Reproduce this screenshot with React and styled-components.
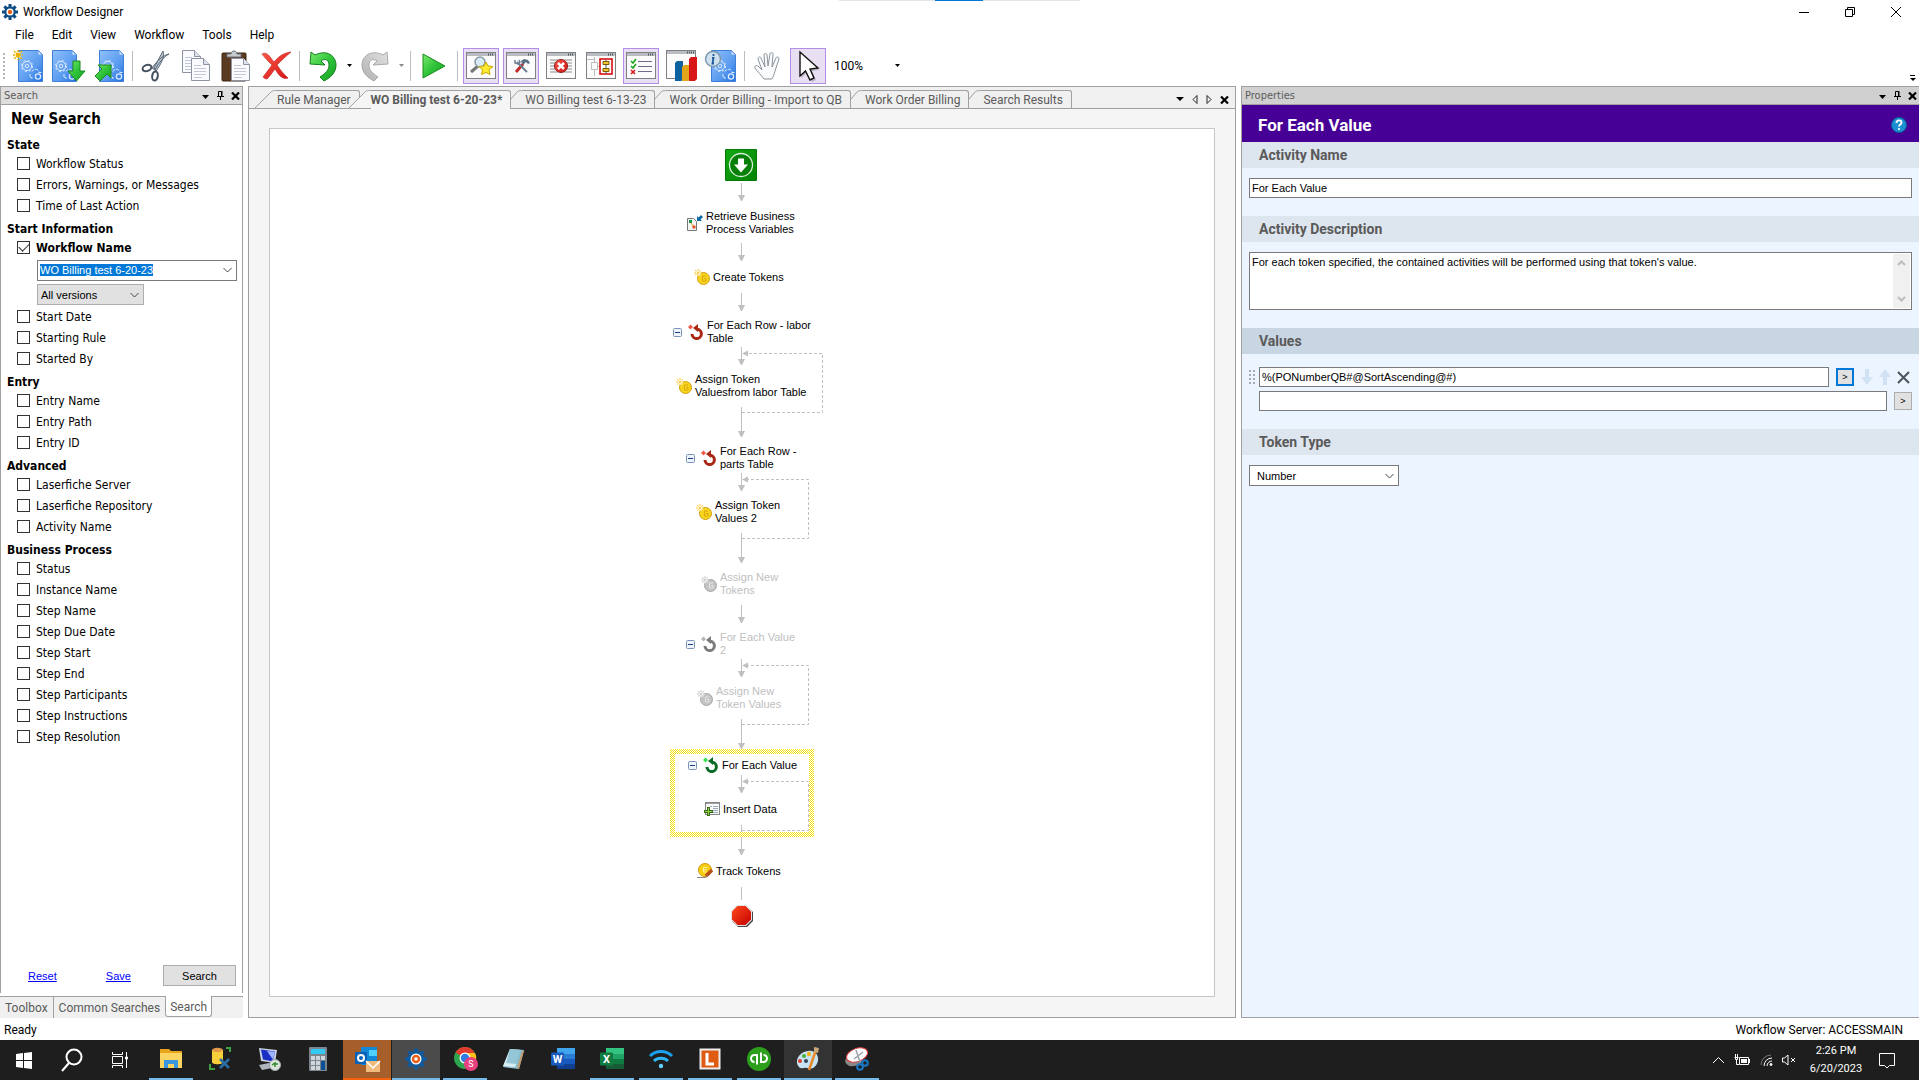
import { useEffect, useRef } from "react";
import styled, { createGlobalStyle } from "styled-components";

const searchGroups = [
  { title: "State", items: ["Workflow Status", "Errors, Warnings, or Messages", "Time of Last Action"] },
  { title: "Start Information", items: ["Workflow Name", "Start Date", "Starting Rule", "Started By"] },
  { title: "Entry", items: ["Entry Name", "Entry Path", "Entry ID"] },
  { title: "Advanced", items: ["Laserfiche Server", "Laserfiche Repository", "Activity Name"] },
  {
    title: "Business Process",
    items: [
      "Status",
      "Instance Name",
      "Step Name",
      "Step Due Date",
      "Step Start",
      "Step End",
      "Step Participants",
      "Step Instructions",
      "Step Resolution",
    ],
  },
];

const documents = [
  "Rule Manager",
  "WO Billing test 6-20-23*",
  "WO Billing test 6-13-23",
  "Work Order Billing - Import to QB",
  "Work Order Billing",
  "Search Results",
];

// positions are measured from the top left of the diagram
const nodes = [
  { x: 36, y: 81, icon: "retrieve", lines: ["Retrieve Business", "Process Variables"] },
  { x: 43, y: 140, icon: "token", lines: ["Create Tokens"] },
  { x: 22, y: 190, icon: "loopRed", lines: ["For Each Row - labor", "Table"], toggle: true },
  { x: 25, y: 244, icon: "token", lines: ["Assign Token", "Valuesfrom labor Table"] },
  { x: 35, y: 316, icon: "loopRed", lines: ["For Each Row -", "parts Table"], toggle: true },
  { x: 45, y: 370, icon: "token", lines: ["Assign Token", "Values 2"] },
  { x: 50, y: 442, icon: "tokenOff", lines: ["Assign New", "Tokens"], off: true },
  { x: 35, y: 502, icon: "loopOff", lines: ["For Each Value", "2"], toggle: true, off: true },
  { x: 46, y: 556, icon: "tokenOff", lines: ["Assign New", "Token Values"], off: true },
  { x: 37, y: 628, icon: "loopGreen", lines: ["For Each Value"], toggle: true },
  { x: 53, y: 672, icon: "insert", lines: ["Insert Data"] },
  { x: 46, y: 734, icon: "track", lines: ["Track Tokens"] },
];

const arrows = [
  [54, 72],
  [114, 132],
  [164, 182],
  [218, 236],
  [278, 308],
  [344, 362],
  [404, 434],
  [476, 494],
  [530, 548],
  [590, 620],
  [646, 664],
  [696, 726],
];

const loops = [
  [224, 283, 171],
  [350, 409, 157],
  [536, 595, 157],
  [652, 701, 157],
];

export default function App() {
  return (
    <Page>
      <GlobalStyle />
      <Gradients />
      <ScreenEdge />
      <TitleBar />
      <MenuBar>
        {["File", "Edit", "View", "Workflow", "Tools", "Help"].map((name) => (
          <button key={name}>{name}</button>
        ))}
      </MenuBar>
      <MainToolbar />
      <Workspace>
        <SearchPanel />
        <Designer />
        <Properties />
      </Workspace>
      <StatusBar>
        <span>Ready</span>
        <span>Workflow Server: ACCESSMAIN</span>
      </StatusBar>
      <Taskbar />
    </Page>
  );
}

function TitleBar() {
  return (
    <Title>
      <svg width="16" height="16" viewBox="0 0 16 16">
        <Gear cx={8} cy={8} r={5} color="#0f4c81" tooth={3} />
        <circle cx="8" cy="8" r="3.6" fill="#fff" />
        <circle cx="8" cy="8" r="2.2" fill="#e5601c" />
      </svg>
      <h1>Workflow Designer</h1>
      <WindowButtons>
        <button aria-label="Minimize">
          <svg width="12" height="12" viewBox="0 0 12 12">
            <path d="M1 6.5h10" stroke="#000" />
          </svg>
        </button>
        <button aria-label="Restore">
          <svg width="12" height="12" viewBox="0 0 12 12" fill="none" stroke="#000">
            <path d="M1.5 3.5h7v7h-7zM3.5 3.5v-2h7v7h-2" />
          </svg>
        </button>
        <button aria-label="Close">
          <svg width="12" height="12" viewBox="0 0 12 12" stroke="#000">
            <path d="M1 1l10 10M11 1L1 11" />
          </svg>
        </button>
      </WindowButtons>
    </Title>
  );
}

function MainToolbar() {
  return (
    <ToolbarRow>
      <Grip />
      <Tool aria-label="New workflow">
        <svg width="32" height="32" viewBox="0 0 32 32">
          <BluePage x={5} />
          <Spark x={5} y={5} />
        </svg>
      </Tool>
      <Tool aria-label="Export workflow">
        <svg width="34" height="32" viewBox="0 0 34 32">
          <BluePage x={0} />
          <path d="M21 11h7v10h5l-8.5 10L16 21h5z" fill="url(#green)" stroke="#1c8a1c" />
        </svg>
      </Tool>
      <Tool aria-label="Import workflow">
        <svg width="32" height="32" viewBox="0 0 32 32">
          <BluePage x={6} />
          <path d="M5 15h13v13l-4-4-7 7-5-5 7-7z" fill="url(#green)" stroke="#1c8a1c" />
        </svg>
      </Tool>
      <Separator />
      <Tool aria-label="Cut">
        <svg width="30" height="32" viewBox="0 0 30 32" fill="none">
          <path d="M22 1c2 6-2 13-7 20l-2-3zM28 4c-4 2-11 9-14 16l-3-2C16 11 22 5 28 4z" fill="#b8c3cd" stroke="#5b6a78" />
          <ellipse cx="6" cy="18" rx="4.5" ry="3" stroke="#44525f" strokeWidth="2" transform="rotate(-20 6 18)" />
          <ellipse cx="14" cy="26" rx="2.8" ry="4.5" stroke="#44525f" strokeWidth="2" transform="rotate(10 14 26)" />
        </svg>
      </Tool>
      <Tool aria-label="Copy">
        <svg width="30" height="32" viewBox="0 0 30 32">
          <Sheet x={1} y={0} />
          <Sheet x={10} y={8} />
        </svg>
      </Tool>
      <Tool aria-label="Paste">
        <svg width="30" height="32" viewBox="0 0 30 32">
          <rect x="1" y="3" width="24" height="28" rx="1" fill="#5a3a20" stroke="#3d2613" />
          <path d="M6 7V4h4c0-4 6-4 6 0h4v3z" fill="#c6cbd0" stroke="#6c7177" />
          <Sheet x={10} y={8} />
        </svg>
      </Tool>
      <Tool aria-label="Delete">
        <svg width="32" height="32" viewBox="0 0 32 32">
          <path
            d="M2 4c5-3 8 3 12 8C18 7 23 3 31 2c-5 4-10 9-14 13 4 6 7 9 11 13-5 2-9-2-13-9-3 4-5 7-8 10-2 0-3-1-4-2 3-4 6-8 9-12C8 11 5 8 2 4z"
            fill="url(#red)"
            stroke="#c22020"
            strokeWidth=".6"
          />
        </svg>
      </Tool>
      <Separator />
      <Tool aria-label="Undo">
        <UndoArrow fill="url(#green)" stroke="#15801e" />
      </Tool>
      <Drop aria-label="Undo list">
        <Caret color="#000" />
      </Drop>
      <Tool aria-label="Redo">
        <UndoArrow flip fill="url(#silver)" stroke="#a9a9a9" />
      </Tool>
      <Drop aria-label="Redo list">
        <Caret color="#8a8a8a" />
      </Drop>
      <Separator />
      <Tool aria-label="Run">
        <svg width="26" height="28" viewBox="0 0 26 28">
          <path d="M2 2l22 12L2 26z" fill="url(#green)" stroke="#1c8a1c" />
        </svg>
      </Tool>
      <Separator />
      <Tool $on aria-label="Search window">
        <WindowIcon>
          <path d="M12 16l-7 6" stroke="#777" strokeWidth="3" />
          <circle cx="14" cy="12" r="5" fill="#d8ecf8" stroke="#8c9aa5" strokeWidth="1.5" />
          <path d="M20 12l2 4 5 .5-4 3.500 1 4.500-4-2-4.500 2 1-4.500-3.500-3.500 5-.5z" fill="#ffe92e" stroke="#c9a800" />
        </WindowIcon>
      </Tool>
      <Tool $on aria-label="Toolbox window">
        <WindowIcon>
          <path d="M17 14l-7 8" stroke="#c22929" strokeWidth="3" />
          <path d="M11 12l10 10" stroke="#6a7e92" strokeWidth="2" />
          <path d="M9 10v3l3 1 2-2-1-2" fill="none" stroke="#6a7e92" strokeWidth="1.5" />
          <path d="M15 11l3-2 4 1 2 3-2 1-2-2-3 3z" fill="#5a6e82" />
        </WindowIcon>
      </Tool>
      <Tool aria-label="Errors window">
        <WindowIcon>
          <path d="M4 10h8M4 13h6M4 16h5M4 19h6M4 22h8M18 10h8M20 13h6M21 16h5M20 19h6M18 22h8" stroke="#8b8b8b" />
          <circle cx="15" cy="16" r="6.5" fill="url(#red)" stroke="#8d1a1a" />
          <path d="M12 13l6 6M18 13l-6 6" stroke="#fff" strokeWidth="2.5" />
        </WindowIcon>
      </Tool>
      <Tool aria-label="Overview window">
        <WindowIcon>
          <path d="M8.500 7v6M8.500 19v7M1 9.500h7M5.500 12.500h6v7h-6zM11 16.500h3" fill="none" stroke="#bdbdbd" />
          <rect x="14" y="9" width="12" height="15" fill="#fff" stroke="#d40000" strokeWidth="1.5" />
          <path d="M20 10v14" stroke="#555" />
          <path d="M17 11.500h6v3h-6zM17 18.500h6v3h-6z" fill="#f2c335" stroke="#7a5a00" />
        </WindowIcon>
      </Tool>
      <Tool $on aria-label="Task list window">
        <WindowIcon>
          <path d="M12 11.500h14M12 16.500h14M12 21.500h14" stroke="#6d6d8b" />
          <path d="M5 11l2 2 3-4M5 16l2 2 3-4" fill="none" stroke="#1aa51a" strokeWidth="1.5" />
          <path d="M5 20l4 4M9 20l-4 4" stroke="#d41414" strokeWidth="1.5" />
        </WindowIcon>
      </Tool>
      <Tool aria-label="Statistics window">
        <WindowIcon tall>
          <path d="M9 13l2-2h6v19l-2 1H9z" fill="#0f62a0" />
          <path d="M16 17l2-2h6v15l-2 1h-6z" fill="#e3a51a" />
          <path d="M23 9l2-2h6v22l-2 2h-6z" fill="#d81616" />
        </WindowIcon>
      </Tool>
      <Tool aria-label="Workflow information">
        <svg width="34" height="32" viewBox="0 0 34 32">
          <BluePage x={7} />
          <circle cx="9" cy="9" r="7.5" fill="#cfe0ee" stroke="#7f99ad" strokeWidth="1.5" />
          <path d="M9.500 4v2M8 8h1.500l-1 5.500H10" stroke="#1d5c9c" strokeWidth="1.8" fill="none" />
        </svg>
      </Tool>
      <Separator />
      <Tool aria-label="Pan">
        <svg width="30" height="30" viewBox="0 0 30 30">
          <path
            d="M11 28c-2-3-7-8-9-11-1-2 1-3 3-2l4 4L5 8c0-2 2-3 3-1l4 9-1-12c0-2 3-2 3 0l1 11 2-12c0-2 3-2 3 0l-1 13 4-9c1-2 3-1 3 1l-4 12c-1 4-2 6-3 8z"
            fill="#fafbfc"
            stroke="#8b949c"
          />
        </svg>
      </Tool>
      <Tool $on aria-label="Select">
        <svg width="30" height="32" viewBox="0 0 30 32">
          <path d="M8 4v24l6-5 5 9 4-2-4-9 7-1z" fill="#8d8798" opacity=".5" />
          <path d="M7 2v24l5.500-5 4.500 9 4-2-4-9 8-1z" fill="#fff" stroke="#111" strokeWidth="1.4" />
        </svg>
      </Tool>
      <Zoom aria-label="Zoom">
        <span>100%</span>
        <Caret color="#000" />
      </Zoom>
      <Overflow aria-label="Toolbar options">
        <svg width="6" height="7" viewBox="0 0 6 7">
          <path d="M0 .5h5" stroke="#000" />
          <path d="M0 3h6L3 6z" />
        </svg>
      </Overflow>
    </ToolbarRow>
  );
}

function SearchPanel() {
  const nameRef = useRef(null);
  useEffect(() => {
    nameRef.current.focus();
    nameRef.current.select();
  }, []);

  return (
    <SearchColumn>
      <PanelHeader title="Search" />
      <SearchBody>
        <h2>New Search</h2>
        {searchGroups.map((group) => (
          <section key={group.title}>
            <h3>{group.title}</h3>
            {group.items.map((item) => (
              <div key={item}>
                <CheckRow $bold={item === "Workflow Name"}>
                  <input type="checkbox" defaultChecked={item === "Workflow Name"} />
                  {item}
                </CheckRow>
                {item === "Workflow Name" && (
                  <NameFilter>
                    <ComboBox>
                      <input ref={nameRef} aria-label="Workflow name" defaultValue="WO Billing test 6-20-23" size="1" />
                      <Chevron />
                    </ComboBox>
                    <SelectBox $grey>
                      <select aria-label="Versions">
                        <option>All versions</option>
                      </select>
                      <Chevron />
                    </SelectBox>
                  </NameFilter>
                )}
              </div>
            ))}
          </section>
        ))}
        <SearchActions>
          <a href="#reset">Reset</a>
          <a href="#save">Save</a>
          <button>Search</button>
        </SearchActions>
      </SearchBody>
      <BottomTabs>
        <button>Toolbox</button>
        <button>Common Searches</button>
        <button aria-current="page">Search</button>
      </BottomTabs>
    </SearchColumn>
  );
}

function Designer() {
  return (
    <DesignerColumn>
      <TabStrip>
        {documents.map((name, i) => (
          <DocTab key={name} $active={i === 1}>
            {i < 2 ? (
              <svg width="22" height="18" viewBox="0 0 22 18">
                <path d="M0 18L16 2c1-1 2-1.500 6-1.500V18z" fill={i === 1 ? "#f5f5f5" : "#f0f0f0"} />
                <path d="M0 18L16 2c1-1 2-1.500 6-1.500" fill="none" stroke="#a0a0a0" />
              </svg>
            ) : (
              <svg width="14" height="18" viewBox="0 0 14 18">
                <path d="M0 9l6-7c1-1 2-1.500 8-1.500" fill="none" stroke="#a0a0a0" />
              </svg>
            )}
            <span>{name}</span>
          </DocTab>
        ))}
        <TabTools>
          <button aria-label="Open documents">
            <svg width="8" height="5" viewBox="0 0 8 5">
              <path d="M0 0h8L4 4z" />
            </svg>
          </button>
          <button aria-label="Scroll left">
            <svg width="6" height="9" viewBox="0 0 6 9">
              <path d="M5 .5v8l-4-4z" fill="none" stroke="#222" />
            </svg>
          </button>
          <button aria-label="Scroll right">
            <svg width="6" height="9" viewBox="0 0 6 9">
              <path d="M1 .5v8l4-4z" fill="none" stroke="#222" />
            </svg>
          </button>
          <button aria-label="Close document">
            <CrossIcon />
          </button>
        </TabTools>
      </TabStrip>
      <Canvas>
        <Diagram>
          <Connectors />
          <StartNode>
            <svg width="32" height="32" viewBox="0 0 32 32">
              <rect width="32" height="32" rx="1" fill="#057a05" />
              <rect x="1" y="1" width="30" height="30" fill="url(#start)" />
              <circle cx="16" cy="16" r="11.5" fill="#067f06" stroke="#d9f0d9" strokeWidth="1.3" />
              <path d="M13 9.500h6v6h4l-7 8-7-8h4z" fill="#fff" />
            </svg>
          </StartNode>
          {nodes.map((node) => (
            <Node key={node.x + "-" + node.y} $x={node.x} $y={node.y} $off={node.off}>
              {node.toggle && (
                <Toggle aria-label={"Collapse " + node.lines.join(" ")}>
                  <svg width="9" height="9" viewBox="0 0 9 9">
                    <rect x=".5" y=".5" width="8" height="8" rx="1" fill="#eef3fb" stroke="#7b93b8" />
                    <path d="M2 4.500h5" stroke="#1b3d7a" />
                  </svg>
                </Toggle>
              )}
              <NodeIcon name={node.icon} />
              <p>
                {node.lines.map((line) => (
                  <span key={line}>{line}</span>
                ))}
              </p>
            </Node>
          ))}
          <StopNode>
            <svg width="24" height="24" viewBox="0 0 24 24">
              <path d="M8 2h8l7 6v9l-6 6H8l-6-6V8z" fill="#444" />
              <path d="M7 1h9l6 6v9l-6 6H7l-6-6V7z" fill="#e4e4e4" />
              <path d="M7.500 2h8l5.500 5.500v8L15.500 21h-8L2 15.500v-8z" fill="url(#stop)" />
            </svg>
          </StopNode>
        </Diagram>
      </Canvas>
    </DesignerColumn>
  );
}

function Connectors() {
  return (
    <svg width="182" height="820" viewBox="0 0 182 820">
      <g fill="#c0c0c0">
        {arrows.map(([top, bottom]) => (
          <path key={top} d={`M90 ${top}h1v${bottom - top - 6}h3l-3 6h-1l-3-6h3z`} />
        ))}
        <path d="M90 758h1v13h-1z" />
        {loops.map(([top]) => (
          <path key={top} d={`M91 ${top + 0.5}l6-3v6z`} />
        ))}
      </g>
      <g fill="none" stroke="#c0c0c0" strokeDasharray="3 2">
        {loops.map(([top, bottom, right]) => (
          <path key={top} d={`M91 ${bottom + 0.5}H${right + 0.5}V${top + 0.5}H97`} />
        ))}
      </g>
      <rect x="21.5" y="622.5" width="139" height="83" fill="none" stroke="#fff" strokeWidth="5" />
      <rect x="21.5" y="622.5" width="139" height="83" fill="none" stroke="url(#checks)" strokeWidth="5" />
    </svg>
  );
}

function Properties() {
  return (
    <PropertiesColumn>
      <PanelHeader title="Properties" dark />
      <Banner>
        <h2>For Each Value</h2>
        <button aria-label="Help">
          <svg width="16" height="16" viewBox="0 0 16 16">
            <circle cx="8" cy="8" r="7.5" fill="#1b8fd2" stroke="#0c5f9c" />
            <path d="M5.500 6c0-3.500 5-3.500 5-.5 0 2-2.500 2-2.500 4" fill="none" stroke="#fff" strokeWidth="1.8" />
            <circle cx="8" cy="12" r="1.1" fill="#fff" />
          </svg>
        </button>
      </Banner>
      <Section>
        <h3 id="activity-name">Activity Name</h3>
        <Field>
          <TextInput aria-labelledby="activity-name" defaultValue="For Each Value" />
        </Field>
      </Section>
      <Section>
        <h3 id="activity-description">Activity Description</h3>
        <Field>
          <Description>
            <textarea
              aria-labelledby="activity-description"
              defaultValue="For each token specified, the contained activities will be performed using that token's value."
            />
            <ScrollTrack>
              <svg width="9" height="6" viewBox="0 0 9 6">
                <path d="M1 5l3.500-3.500L8 5" />
              </svg>
              <svg width="9" height="6" viewBox="0 0 9 6">
                <path d="M1 1l3.500 3.500L8 1" />
              </svg>
            </ScrollTrack>
          </Description>
        </Field>
      </Section>
      <Section $dark>
        <h3>Values</h3>
        <ValueList>
          <ValueRow>
            <DragHandle width="6" height="18" viewBox="0 0 6 18">
              {[2, 6, 10, 14].map((y) => (
                <path key={y} d={`M0 ${y}h2v2h-2zM4 ${y}h2v2h-2z`} />
              ))}
            </DragHandle>
            <TextInput aria-label="Value 1" defaultValue="%(PONumberQB#@SortAscending@#)" />
            <TokenButton $focus aria-label="Insert token in value 1">
              &gt;
            </TokenButton>
            <RowTools>
              <button aria-label="Move down">
                <svg width="12" height="16" viewBox="0 0 12 16" fill="#d2e2f5">
                  <path d="M4 0h4v8h4l-6 8-6-8h4z" />
                </svg>
              </button>
              <button aria-label="Move up">
                <svg width="12" height="16" viewBox="0 0 12 16" fill="#d2e2f5">
                  <path d="M4 16h4V8h4L6 0 0 8h4z" />
                </svg>
              </button>
              <button aria-label="Remove value">
                <svg width="13" height="13" viewBox="0 0 13 13" stroke="#4b535c" strokeWidth="2">
                  <path d="M1 1l11 11M12 1L1 12" />
                </svg>
              </button>
            </RowTools>
          </ValueRow>
          <ValueRow $indent>
            <TextInput aria-label="Value 2" />
            <TokenButton aria-label="Insert token in value 2">&gt;</TokenButton>
          </ValueRow>
        </ValueList>
      </Section>
      <Section>
        <h3 id="token-type">Token Type</h3>
        <Field>
          <SelectBox $wide>
            <select aria-labelledby="token-type">
              <option>Number</option>
            </select>
            <Chevron />
          </SelectBox>
        </Field>
      </Section>
    </PropertiesColumn>
  );
}

function PanelHeader({ title, dark }) {
  return (
    <HeaderBar $dark={dark}>
      <h2>{title}</h2>
      <button aria-label={title + " options"}>
        <svg width="8" height="5" viewBox="0 0 8 5">
          <path d="M0 0h7L3.500 4z" />
        </svg>
      </button>
      <button aria-label={"Pin " + title}>
        <svg width="7" height="9" viewBox="0 0 7 9" fill="none" stroke="#000">
          <path d="M1.500 5V.5h3V5M0 5.500h7M3.500 5.500V9M5 0v5" />
        </svg>
      </button>
      <button aria-label={"Close " + title}>
        <CrossIcon />
      </button>
    </HeaderBar>
  );
}

function CrossIcon() {
  return (
    <svg width="9" height="8" viewBox="0 0 9 8" stroke="#000" strokeWidth="2.2">
      <path d="M1 .5l7 7M8 .5l-7 7" />
    </svg>
  );
}

function Caret({ color }) {
  return (
    <svg width="5" height="4" viewBox="0 0 5 4" fill={color}>
      <path d="M0 0h5L2.500 3z" />
    </svg>
  );
}

function Chevron() {
  return (
    <svg width="9" height="6" viewBox="0 0 9 6" fill="none" stroke="#444">
      <path d="M.5 1l4 4 4-4" />
    </svg>
  );
}

function Gear({ cx, cy, r, color, tooth }) {
  return (
    <g fill={color}>
      <circle cx={cx} cy={cy} r={r + 0.8} />
      {[0, 45, 90, 135].map((angle) => (
        <rect
          key={angle}
          x={cx - tooth / 2}
          y={cy - r - 3}
          width={tooth}
          height={(r + 3) * 2}
          transform={`rotate(${angle} ${cx} ${cy})`}
        />
      ))}
    </g>
  );
}

function BluePage({ x }) {
  return (
    <g transform={`translate(${x} 0)`}>
      <path d="M.5 .5h20l4 4v27H.5z" fill="url(#bluePage)" stroke="#3f7fd6" />
      <path d="M20 .5v4.500h4.500z" fill="#e3efff" stroke="#6aa0e8" />
      <g fill="none" stroke="#dbeaff">
        <circle cx="9" cy="16" r="1.8" />
        <circle cx="9" cy="16" r="4.6" />
        <circle cx="9" cy="16" r="5.6" strokeDasharray="2 2.4" />
        <circle cx="20" cy="26.5" r="2.6" strokeWidth="1.3" />
        <path d="M14 21.500c1-3 6-3 7 0M12 24v3.500h2v2M23.500 22.500h-3" strokeDasharray="3 1" />
      </g>
    </g>
  );
}

function Spark({ x, y }) {
  return (
    <g transform={`translate(${x} ${y})`} stroke="#e8b000" strokeWidth="1.5">
      <circle r="3" fill="#fff3a8" stroke="none" />
      <path d="M0-5V5M-5 0H5M-4-4l8 8M4-4l-8 8" strokeDasharray="2 1" />
    </g>
  );
}

function Sheet({ x, y }) {
  return (
    <g transform={`translate(${x} ${y})`}>
      <path d="M.5 .5h12l6 6v16H.5z" fill="#fafbfe" stroke="#8d93a3" />
      <path d="M12.500 .5v6h6" fill="#dfe3ee" stroke="#8d93a3" />
      <path d="M3 7.500h7M3 10.500h12M3 13.500h12M3 16.500h12M3 19.500h8" stroke="#c3c8d8" />
    </g>
  );
}

function UndoArrow({ flip, fill, stroke }) {
  return (
    <svg width="28" height="32" viewBox="0 0 28 32">
      <path
        d="M2 2l4 3C18-1 27 6 27 15c0 8-6 13-12 16l-4-4c6-4 9-7 9-12 0-5-4-7-8-4l4 4-15-1z"
        fill={fill}
        stroke={stroke}
        transform={flip ? "translate(28 0) scale(-1 1)" : undefined}
      />
    </svg>
  );
}

function WindowIcon({ children, tall }) {
  return (
    <svg width="32" height="32" viewBox="0 0 32 32">
      <rect x="1.5" y={tall ? 0.5 : 2.5} width="29" height={tall ? 28 : 26} fill="#fbfbfb" stroke="#808080" />
      <path d={tall ? "M2 2.500h28" : "M2 4.500h28"} stroke="#b9bcc2" strokeWidth="3" />
      <path d={tall ? "M22 2.500h7" : "M23 4.500h6"} stroke="#4e5560" strokeWidth="2" strokeDasharray="1 1" />
      <g transform="translate(1 0)">{children}</g>
    </svg>
  );
}

function NodeIcon({ name }) {
  if (name.startsWith("token")) {
    const off = name === "tokenOff";
    return (
      <svg width="16" height="16" viewBox="0 0 16 16">
        <circle cx="9.5" cy="9.5" r="6" fill={off ? "#c4c4c4" : "#f7d41c"} stroke={off ? "#a8a8a8" : "#d19c10"} />
        <path d="M12 7H8.500v5h3.500V9.500h-2" fill="none" stroke={off ? "#e4e4e4" : "#dba70c"} />
        <g stroke={off ? "#cfcfcf" : "#f5c84a"}>
          <circle cx="4" cy="4" r="3" fill={off ? "#eee" : "#fff8d0"} stroke="none" />
          <path d="M4 0v8M0 4h8M1 1l6 6M7 1L1 7" strokeDasharray="2 1" />
        </g>
      </svg>
    );
  }
  if (name.startsWith("loop")) {
    const [dark, light] = {
      loopRed: ["#a82814", "#f0584a"],
      loopGreen: ["#0a6b27", "#35e04d"],
      loopOff: ["#7c7c7c", "#b5b5b5"],
    }[name];
    return (
      <svg width="16" height="16" viewBox="0 0 16 16">
        <path d="M9 5.200A4.700 4.700 0 1 1 4 10" fill="none" stroke={dark} strokeWidth="3" />
        <path d="M5 4l5-4v8z" fill={dark} />
        <path d="M2.500 .5L5 3 2.500 5.500 0 3z" fill={light} />
      </svg>
    );
  }
  if (name === "retrieve") {
    return (
      <svg width="16" height="16" viewBox="0 0 16 16">
        <path d="M.5 3.500h6l3 3v9h-9z" fill="#f4f4f4" stroke="#777" />
        <path d="M2 5h3v3H2z" fill="#159447" />
        <path d="M4 8l3 4" stroke="#d9a520" />
        <circle cx="7" cy="12" r="1.7" fill="#e8542a" />
        <path d="M10 1v5h5l-1.500-1.500L16 2l-2-2-2.500 2.500z" fill="#0e6aa5" />
      </svg>
    );
  }
  if (name === "insert") {
    return (
      <svg width="16" height="16" viewBox="0 0 16 16">
        <rect x="1.5" y="1.5" width="14" height="12" fill="#fafafa" stroke="#858585" />
        <path d="M2 2.500h13" stroke="#a0a0a0" />
        <path d="M6 5.500h2M9 5.500h5M9 7.500h5M9 9.500h5M9 11.500h5" stroke="#9ab" />
        <path d="M3 6h3v3h3v3H6v3H3v-3H0V9h3z" fill="#3d6e14" />
        <path d="M4 7h1v3h3v1H5v3H4v-3H1v-1h3z" fill="#8fcb4a" />
      </svg>
    );
  }
  return (
    <svg width="16" height="16" viewBox="0 0 16 16">
      <circle cx="8" cy="7" r="6.5" fill="#f6cf12" stroke="#d39a08" />
      <path d="M10.500 4.500h-4V9h3M7 7h3" fill="none" stroke="#fff0a0" />
      <path d="M15 7l-6 6" stroke="#b8501a" strokeWidth="3.5" />
      <path d="M0 14.500h9l2-2" stroke="#888" fill="none" />
    </svg>
  );
}

function Taskbar() {
  return (
    <Bar>
      <SystemButtons>
        <button aria-label="Start">
          <svg width="18" height="18" viewBox="0 0 18 18" fill="#fff">
            <path d="M1 3l7-1v7H1zM9 2l8-1v8H9zM1 10h7v7l-7-1zM9 10h8v8l-8-1z" />
          </svg>
        </button>
        <button aria-label="Find">
          <svg width="24" height="24" viewBox="0 0 24 24" fill="none" stroke="#fff" strokeWidth="2">
            <circle cx="14" cy="9" r="7.5" />
            <path d="M9 15l-7 8" />
          </svg>
        </button>
        <button aria-label="Task view">
          <svg width="18" height="18" viewBox="0 0 18 18" fill="none" stroke="#fff">
            <path d="M1.500 1v2.500h10V1M1.500 17v-2.500h10V17M1.500 5.500h10v7h-10zM15.500 1v16" />
            <path d="M14.500 6h2v2h-2z" fill="#fff" />
          </svg>
        </button>
      </SystemButtons>
      <AppButton aria-label="File Explorer" $line="#76b9ed">
        <svg viewBox="0 0 24 24">
          <path d="M1 2h9l2 2h11v17H1z" fill="#e8a51c" />
          <path d="M1 6h22v15H1z" fill="#fcd462" />
          <path d="M5 21v-8h14v8h-4v-4H9v4z" fill="#3a96dd" />
        </svg>
      </AppButton>
      <AppButton aria-label="Database tools">
        <svg viewBox="0 0 24 24">
          <path d="M4 3v12c0 3 11 3 11 0V3z" fill="#f9cf3c" />
          <ellipse cx="9.5" cy="3" rx="5.5" ry="2.2" fill="#e09a4a" />
          <path d="M18 1h4v4M2 17v5h5" fill="none" stroke="#3fa142" strokeWidth="2" />
          <path d="M12 12l9 9M21 12l-9 9" stroke="#2a6ea8" strokeWidth="2.5" />
        </svg>
      </AppButton>
      <AppButton aria-label="Remote desktop">
        <svg viewBox="0 0 24 24">
          <path d="M2 1l18 2-2 13L4 14z" fill="#c9d3e2" />
          <path d="M4 2.500l14 2-2 10-10-2z" fill="#1a2fc4" />
          <path d="M10 4l8 .8-2 8z" fill="#9fb4ff" />
          <path d="M2 18l10-2 3 5-10 2z" fill="#aeb5bd" />
          <circle cx="18" cy="18" r="5.5" fill="#dfe4dd" stroke="#9aa" />
          <path d="M15 18l3-2v4M18 17h3" stroke="#2e8b2e" strokeWidth="1.5" fill="none" />
        </svg>
      </AppButton>
      <AppButton aria-label="Calculator">
        <svg viewBox="0 0 24 24">
          <rect x="3" width="18" height="24" rx="1" fill="#7c858d" />
          <rect x="5" y="2" width="14" height="5" fill="#34c8f4" />
          <path d="M5 9h4v4H5zM10 9h4v4h-4zM15 9h4v4h-4zM5 14h4v4H5zM10 14h4v4h-4zM5 19h4v4H5zM10 19h4v4h-4z" fill="#cfd6dc" />
          <path d="M15 14h4v9h-4z" fill="#0a4f94" />
        </svg>
      </AppButton>
      <AppButton aria-label="Outlook" $bg="#a65f2a" $line="#f7630c">
        <svg viewBox="0 0 24 24">
          <path d="M6 0h16v18H6z" fill="#1488d8" />
          <path d="M14 3h8v6h-8z" fill="#50d0ff" />
          <rect x="0" y="5" width="12" height="12" fill="#0a62b8" />
          <circle cx="6" cy="11" r="3" fill="none" stroke="#fff" strokeWidth="2" />
          <path d="M11 14h14v11H11z" fill="#f0bb7c" />
          <path d="M11 14l7 7 7-7" fill="none" stroke="#fff" strokeWidth="1.5" />
        </svg>
      </AppButton>
      <AppButton aria-label="Workflow Designer" $bg="#4b4b4b" $line="#76b9ed">
        <svg viewBox="0 0 24 24">
          <Gear cx={12} cy={12} r={7.5} color="#0f5a9c" tooth={4} />
          <circle cx="12" cy="12" r="5.5" fill="#fff" />
          <circle cx="12" cy="12" r="3" fill="#fff" stroke="#e5601c" strokeWidth="2.5" />
        </svg>
      </AppButton>
      <AppButton aria-label="Chrome" $line="#76b9ed">
        <svg viewBox="0 0 24 24">
          <circle cx="12" cy="11" r="11" fill="#2da44e" />
          <path d="M2.500 5.500a11 11 0 0 1 19 0L12 11z" fill="#e33b2e" />
          <path d="M12 6h10a11 11 0 0 1-9 16l4-9z" fill="#fbc116" />
          <circle cx="12" cy="11" r="5.5" fill="#fff" />
          <circle cx="12" cy="11" r="4.2" fill="#2f7de1" />
          <circle cx="18" cy="17" r="7" fill="#e8407e" />
          <text x="18" y="20" textAnchor="middle" fontSize="9" fill="#fff">
            S
          </text>
        </svg>
      </AppButton>
      <AppButton aria-label="Notepad">
        <svg viewBox="0 0 24 24">
          <path d="M8 2l14 1-5 19-16-2z" fill="#8fc4d3" />
          <path d="M8 2l11 1-6 17-12-1z" fill="#d9eef3" />
          <path d="M8 2l12 1-5 14-11-1z" fill="#77b5c7" opacity=".7" />
          <path d="M20 4h2l-5 18-2-1z" fill="#c49a6c" />
        </svg>
      </AppButton>
      <AppButton aria-label="Word">
        <OfficeIcon letter="W" colors={["#41a5ee", "#2b7cd3", "#185abd", "#103f91"]} />
      </AppButton>
      <AppButton aria-label="Excel" $line="#76b9ed">
        <OfficeIcon letter="X" colors={["#33c481", "#21a366", "#107c41", "#185c37"]} />
      </AppButton>
      <AppButton aria-label="Wireless" $line="#76b9ed">
        <svg viewBox="0 0 24 24" fill="none" strokeWidth="3">
          <path d="M1 9a15.500 15.500 0 0 1 22 0" stroke="#1ba1ee" />
          <path d="M5 14a10 10 0 0 1 14 0" stroke="#2db5f5" />
          <circle cx="12" cy="19" r="2.2" fill="#5fd0ff" />
        </svg>
      </AppButton>
      <AppButton aria-label="Laserfiche" $line="#76b9ed">
        <svg viewBox="0 0 24 24">
          <rect x="2.5" y="2.5" width="19" height="19" fill="#de5b14" stroke="#eee" strokeWidth="2" />
          <path d="M9 6v11h7" fill="none" stroke="#fff" strokeWidth="3" />
        </svg>
      </AppButton>
      <AppButton aria-label="QuickBooks" $line="#76b9ed">
        <svg viewBox="0 0 24 24" fill="none" stroke="#fff" strokeWidth="2">
          <circle cx="12" cy="12" r="12" fill="#2ca01c" stroke="none" />
          <path d="M10 17.500V8H7.500a3.500 3.500 0 0 0 0 7M14 5.500V15h2.500a3.500 3.500 0 0 0 0-7" />
        </svg>
      </AppButton>
      <AppButton aria-label="Paint" $bg="#333" $line="#76b9ed">
        <svg viewBox="0 0 24 24">
          <path d="M12 4C3 5-2 14 3 20c3 3 6 0 8 1 4 2 9 0 11-7 1-7-4-11-10-10z" fill="#c8e3f2" />
          <circle cx="4" cy="14" r="2" fill="#e03e2e" />
          <circle cx="8" cy="9" r="2" fill="#4fae3a" />
          <circle cx="13" cy="7" r="2.2" fill="#f2b01e" />
          <circle cx="10" cy="14" r="2" fill="#345" />
          <path d="M20 3l-7 20" stroke="#e8892a" strokeWidth="2.5" />
          <path d="M18 0l5 1-1 5-4-1z" fill="#caa778" />
        </svg>
      </AppButton>
      <AppButton aria-label="Snipping Tool" $line="#76b9ed">
        <svg viewBox="0 0 24 24">
          <ellipse cx="9" cy="13" rx="9" ry="6" fill="#888" transform="rotate(-15 9 13)" />
          <ellipse cx="12" cy="8" rx="11" ry="6.5" fill="#fff" stroke="#e04040" transform="rotate(-20 12 8)" />
          <path d="M11 3l4 12M18 5l-9 7" stroke="#9aa3aa" strokeWidth="1.5" />
          <circle cx="15" cy="20" r="2.8" fill="none" stroke="#1a78c8" strokeWidth="2" />
          <circle cx="20" cy="16" r="2.8" fill="none" stroke="#1a78c8" strokeWidth="2" />
        </svg>
      </AppButton>
      <Tray>
        <svg width="13" height="8" viewBox="0 0 13 8">
          <path d="M1 7l5.500-5.500L12 7" />
        </svg>
        <svg width="17" height="12" viewBox="0 0 17 12">
          <path d="M5.500 3.500h9v7h-9zM15.500 5v4" />
          <path d="M7 7h6" strokeWidth="4" />
          <path d="M1.500 0v3M3.500 0v3M.5 3.500h4M1.500 4v1.500h2V4M2.500 5v5.500H5" />
        </svg>
        <svg width="13" height="12" viewBox="0 0 13 12">
          <path d="M1 11A10 10 0 0 1 11 1" stroke="#777" />
          <path d="M4 12a8 8 0 0 1 8-8M7 12a5 5 0 0 1 5-5" />
          <circle cx="11" cy="10.5" r="1" fill="#fff" />
        </svg>
        <svg width="15" height="12" viewBox="0 0 15 12">
          <path d="M.5 4h2L6 1v10L2.500 8h-2zM9 4l4 4M13 4L9 8" />
        </svg>
        <Clock>
          <span>2:26 PM</span>
          <span>6/20/2023</span>
        </Clock>
        <svg width="17" height="17" viewBox="0 0 17 17">
          <path d="M.5 1.500h15v12h-5L8 16l-2.500-2.500h-5z" />
        </svg>
      </Tray>
    </Bar>
  );
}

function OfficeIcon({ letter, colors }) {
  return (
    <svg viewBox="0 0 24 24">
      <path d="M6 1h18v6H6z" fill={colors[0]} />
      <path d="M6 7h18v5H6z" fill={colors[1]} />
      <path d="M6 12h18v5H6z" fill={colors[2]} />
      <path d="M6 17h18v5H6z" fill={colors[3]} />
      <rect x="0" y="5.5" width="13" height="13" rx="1" fill={colors[2]} />
      <text x="6.5" y="16" textAnchor="middle" fontSize="11" fontWeight="700" fill="#fff">
        {letter}
      </text>
    </svg>
  );
}

function Gradients() {
  return (
    <Defs width="0" height="0" aria-hidden="true">
      <defs>
        <linearGradient id="green" x1="0" y1="0" x2="1" y2="1">
          <stop offset="0" stopColor="#7bea6c" />
          <stop offset=".5" stopColor="#2fc43a" />
          <stop offset="1" stopColor="#16a022" />
        </linearGradient>
        <linearGradient id="silver" x1="0" y1="0" x2="1" y2="1">
          <stop offset="0" stopColor="#e2e2e2" />
          <stop offset="1" stopColor="#b0b0b0" />
        </linearGradient>
        <linearGradient id="red" x1="0" y1="0" x2="1" y2="1">
          <stop offset="0" stopColor="#ff5a48" />
          <stop offset="1" stopColor="#d01212" />
        </linearGradient>
        <linearGradient id="bluePage" x1="0" y1="0" x2="1" y2="1">
          <stop offset="0" stopColor="#8fc0fa" />
          <stop offset=".6" stopColor="#5b9cf0" />
          <stop offset="1" stopColor="#1f6fe0" />
        </linearGradient>
        <linearGradient id="start" x1="0" y1="0" x2="1" y2="1">
          <stop offset="0" stopColor="#12a812" />
          <stop offset="1" stopColor="#058205" />
        </linearGradient>
        <linearGradient id="stop" x1="0" y1="0" x2="1" y2="1">
          <stop offset="0" stopColor="#ff4a1c" />
          <stop offset="1" stopColor="#c40000" />
        </linearGradient>
        <pattern id="checks" width="2" height="2" patternUnits="userSpaceOnUse">
          <path d="M0 0h1v1H0zM1 1h1v1H1z" fill="#f2e014" />
        </pattern>
      </defs>
    </Defs>
  );
}

// Styling
const uiFont = `Roboto, "Open Sans", sans-serif`;
const searchFont = `"DejaVu Sans Condensed", "DejaVu Sans", sans-serif`;
const formFont = `"Liberation Sans", Arial, sans-serif`;

const GlobalStyle = createGlobalStyle`
  * {
    box-sizing: border-box;
  }
  body {
    margin: 0;
    background: #fff;
    color: #000;
    font-family: ${uiFont};
    font-size: 12px;
  }
  h1, h2, h3, p {
    margin: 0;
    font-size: 12px;
    font-weight: 400;
  }
  button, input, select, textarea {
    margin: 0;
    padding: 0;
    border: none;
    border-radius: 0;
    background: none;
    color: inherit;
    font: inherit;
    outline: none;
  }
  svg {
    display: block;
    flex-shrink: 0;
  }
`;

const Page = styled.div`
  position: relative;
  display: flex;
  flex-direction: column;
  min-height: 100vh;
`;

const Defs = styled.svg`
  position: absolute;
`;

const ScreenEdge = styled.div`
  position: absolute;
  top: 0;
  right: 0;
  left: 0;
  width: 241px;
  height: 1px;
  margin: 0 auto;
  background: linear-gradient(to right, #e5e5e5 96px, #0078d7 96px 144px, #e5e5e5 144px);
`;

const Title = styled.header`
  display: flex;
  align-items: center;
  height: 24px;
  padding-left: 2px;
  h1 {
    flex: 1;
    padding-left: 5px;
  }
`;

const WindowButtons = styled.div`
  display: flex;
  button {
    display: flex;
    align-items: center;
    justify-content: center;
    width: 46px;
    height: 22px;
  }
`;

const MenuBar = styled.nav`
  display: flex;
  gap: 18px;
  height: 22px;
  padding-left: 15px;
`;

const ToolbarRow = styled.div`
  display: flex;
  align-items: center;
  height: 40px;
`;

const Grip = styled.div`
  width: 2px;
  height: 26px;
  margin: 0 4px 0 3px;
  background: repeating-linear-gradient(#b5b5b5 0 2px, transparent 2px 4px);
`;

const Tool = styled.button`
  display: flex;
  align-items: center;
  justify-content: center;
  width: 36px;
  height: 36px;
  margin: 0 2px;
  border: 1px solid ${(p) => (p.$on ? "#b48ee6" : "transparent")};
  background: ${(p) => (p.$on ? "#e8dff2" : "none")};
`;

const Drop = styled.button`
  display: flex;
  align-items: center;
  justify-content: center;
  width: 12px;
  height: 36px;
`;

const Separator = styled.div`
  width: 1px;
  height: 30px;
  margin: 0 3px;
  background: #bdbdbd;
`;

const Zoom = styled.button`
  display: flex;
  align-items: center;
  justify-content: space-between;
  width: 78px;
  height: 36px;
  padding: 0 6px;
  margin-right: auto;
`;

const Overflow = styled.button`
  align-self: flex-end;
  padding: 4px 3px;
`;

const Workspace = styled.main`
  display: flex;
  flex: 1;
  gap: 5px;
`;

const HeaderBar = styled.div`
  display: flex;
  align-items: center;
  gap: 7px;
  height: 19px;
  padding: 0 2px 0 3px;
  border: 1px solid #a0a0a0;
  background: ${(p) => (p.$dark ? "#d0d0d0" : "#dedede")};
  color: #5c5c5c;
  font-family: ${searchFont};
  h2 {
    flex: 1;
    font-size: 11px;
  }
  button:first-of-type {
    padding-top: 3px;
  }
`;

const SearchColumn = styled.aside`
  display: flex;
  flex-direction: column;
  width: 243px;
  font-family: ${searchFont};
`;

const SearchBody = styled.form`
  display: flex;
  flex: 1;
  flex-direction: column;
  border: solid #a0a0a0;
  border-width: 0 1px;
  h2 {
    height: 27px;
    padding-left: 10px;
    font-size: 15px;
    font-weight: 700;
    line-height: 29px;
  }
  h3 {
    height: 21px;
    padding-left: 6px;
    font-size: 12px;
    font-weight: 700;
    line-height: 26px;
  }
`;

const CheckRow = styled.label`
  display: flex;
  align-items: center;
  gap: 6px;
  height: 21px;
  padding-left: 16px;
  font-weight: ${(p) => (p.$bold ? 700 : 400)};
  input {
    display: flex;
    align-items: center;
    justify-content: center;
    width: 13px;
    height: 13px;
    border: 1px solid #333;
    background: #fff;
    appearance: none;
  }
  input:checked::after {
    content: "";
    width: 9px;
    height: 5px;
    margin-top: -3px;
    border: solid #333;
    border-width: 0 0 1px 1px;
    transform: rotate(-45deg);
  }
`;

const NameFilter = styled.div`
  display: flex;
  flex-direction: column;
  gap: 3px;
  padding: 2px 5px 1px 36px;
  font-family: ${formFont};
  font-size: 11px;
`;

const ComboBox = styled.div`
  display: flex;
  align-items: center;
  height: 21px;
  padding: 0 4px 1px 2px;
  border: 1px solid #7a7a7a;
  input {
    flex: 1;
    min-width: 0;
    height: 14px;
  }
  input::selection {
    background: #0078d7;
    color: #fff;
  }
`;

const SelectBox = styled.div`
  display: flex;
  align-items: center;
  width: ${(p) => (p.$wide ? 150 : 107)}px;
  height: 21px;
  border: 1px solid ${(p) => (p.$grey ? "#adadad" : "#7a7a7a")};
  background: ${(p) => (p.$grey ? "#e1e1e1" : "#fff")};
  select {
    width: 100%;
    height: 19px;
    padding-left: ${(p) => (p.$wide ? 7 : 3)}px;
    appearance: none;
  }
  svg {
    margin: 0 4px 0 -13px;
    pointer-events: none;
  }
`;

const SearchActions = styled.div`
  display: flex;
  align-items: center;
  justify-content: space-between;
  margin: auto 6px 7px 27px;
  font-family: ${formFont};
  font-size: 11px;
  a {
    color: #00f;
  }
  button {
    width: 73px;
    height: 21px;
    margin-left: -17px;
    border: 1px solid #adadad;
    background: #e1e1e1;
  }
`;

const BottomTabs = styled.div`
  display: flex;
  height: 22px;
  margin-top: 3px;
  border-top: 1px solid #a0a0a0;
  background: #f0f0f0;
  color: #5a5a5a;
  font-family: ${uiFont};
  button {
    padding: 0 5px;
    white-space: nowrap;
  }
  button:first-child {
    border-right: 1px solid #a0a0a0;
  }
  button:last-child {
    height: 21px;
    margin: -1px 0 0;
    padding: 1px 4px 0;
    border: solid #a0a0a0;
    border-width: 0 1px 1px;
    border-radius: 0 0 3px 3px;
    background: #fff;
  }
`;

const DesignerColumn = styled.section`
  display: flex;
  flex: 1;
  flex-direction: column;
  min-width: 0;
  border: 1px solid #a0a0a0;
  background: #f5f5f5;
`;

const TabStrip = styled.div`
  display: flex;
  align-items: flex-end;
  height: 22px;
  padding-left: 6px;
  border-bottom: 1px solid #a0a0a0;
  background: #f0f0f0;
`;

const DocTab = styled.button`
  display: flex;
  height: ${(p) => (p.$active ? 19 : 18)}px;
  margin-bottom: ${(p) => (p.$active ? -1 : 0)}px;
  margin-left: ${(p) => (p.$active ? -11 : 0)}px;
  color: #5a5a5a;
  font-weight: ${(p) => (p.$active ? 700 : 400)};
  line-height: 18px;
  white-space: nowrap;
  span {
    height: 100%;
    padding-right: 8px;
    border: solid #a0a0a0;
    border-width: 1px 1px 0 0;
    border-top-right-radius: 3px;
    background: ${(p) => (p.$active ? "#f5f5f5" : "none")};
  }
`;

const TabTools = styled.div`
  display: flex;
  align-items: center;
  align-self: center;
  gap: 8px;
  margin: 4px 6px 0 auto;
`;

const Canvas = styled.div`
  display: flex;
  flex: 1;
  justify-content: center;
  margin: 19px 20px 20px;
  border: 1px solid #c6c6c6;
  background: #fff;
`;

const Diagram = styled.div`
  position: relative;
  width: 182px;
  height: 820px;
  font-family: ${formFont};
  font-size: 11px;
`;

const Node = styled.div`
  position: absolute;
  left: ${(p) => p.$x}px;
  top: ${(p) => p.$y}px;
  display: flex;
  align-items: center;
  gap: 3px;
  color: ${(p) => (p.$off ? "#c0c0c0" : "#000")};
  p {
    font-size: 11px;
    line-height: 13px;
    white-space: nowrap;
  }
  span {
    display: block;
  }
`;

const Toggle = styled.button`
  margin-right: 3px;
`;

const StartNode = styled.div`
  position: absolute;
  left: 74px;
  top: 20px;
`;

const StopNode = styled.div`
  position: absolute;
  left: 79px;
  top: 775px;
`;

const PropertiesColumn = styled.aside`
  width: 678px;
  border: solid #a0a0a0;
  border-width: 0 0 1px 1px;
  background: #ebf4ff;
  > ${HeaderBar} {
    border-width: 1px 0;
  }
`;

const Banner = styled.div`
  display: flex;
  align-items: center;
  justify-content: space-between;
  height: 37px;
  padding: 3px 12px 0 16px;
  background: #460096;
  color: #fff;
  h2 {
    font-size: 17px;
    font-weight: 700;
  }
`;

const Section = styled.section`
  h3 {
    height: 26px;
    padding-left: 17px;
    background: ${(p) => (p.$dark ? "#c8d5e2" : "#dde5ee")};
    color: #5a5a5a;
    font-size: 14px;
    font-weight: 700;
    line-height: 27px;
  }
`;

const Field = styled.div`
  padding: 10px 7px 18px;
  font-family: ${formFont};
  font-size: 11px;
`;

const TextInput = styled.input`
  display: block;
  flex: 1;
  width: 100%;
  min-width: 0;
  height: 20px;
  padding: 0 2px;
  border: 1px solid #7a7a7a;
  background: #fff;
`;

const Description = styled.div`
  display: flex;
  height: 58px;
  padding: 1px;
  border: 1px solid #7a7a7a;
  background: #fff;
  textarea {
    flex: 1;
    padding: 2px 1px;
    resize: none;
    overflow: hidden;
  }
`;

const ScrollTrack = styled.div`
  display: flex;
  flex-direction: column;
  align-items: center;
  justify-content: space-between;
  width: 17px;
  padding: 6px 0;
  background: #f0f0f0;
  path {
    fill: none;
    stroke: #bdbdbd;
    stroke-width: 2;
  }
`;

const ValueList = styled.div`
  display: flex;
  flex-direction: column;
  gap: 4px;
  padding: 13px 7px 18px;
  font-family: ${formFont};
  font-size: 11px;
`;

const ValueRow = styled.div`
  display: flex;
  align-items: center;
  gap: 7px;
  padding-left: ${(p) => (p.$indent ? 10 : 0)}px;
`;

const DragHandle = styled.svg`
  margin-right: -3px;
  fill: #a8abb0;
`;

const TokenButton = styled.button`
  width: 18px;
  height: 18px;
  border: ${(p) => (p.$focus ? "2px solid #0078d7" : "1px solid #adadad")};
  background: #e1e1e1;
  font-size: 9px;
`;

const RowTools = styled.div`
  display: flex;
  align-items: center;
  gap: 6px;
  padding-right: 2px;
`;

const StatusBar = styled.footer`
  display: flex;
  align-items: center;
  justify-content: space-between;
  height: 22px;
  padding: 1px 16px 0 4px;
`;

const Bar = styled.footer`
  display: flex;
  height: 40px;
  background: #1e1e1e;
  color: #fff;
`;

const SystemButtons = styled.div`
  display: flex;
  margin-right: 3px;
  button {
    display: flex;
    align-items: center;
    justify-content: center;
    width: 48px;
  }
`;

const AppButton = styled.button`
  display: flex;
  align-items: center;
  justify-content: center;
  width: 48px;
  margin-right: 1px;
  border-bottom: 2px solid ${(p) => p.$line || "transparent"};
  border-image: ${(p) =>
    p.$line && !p.$bg
      ? `linear-gradient(to right, transparent 4px, ${p.$line} 4px 44px, transparent 44px) 2`
      : "none"};
  background: ${(p) => p.$bg || "none"};
  svg {
    width: 24px;
    height: 24px;
    overflow: visible;
  }
`;

const Tray = styled.div`
  display: flex;
  align-items: center;
  gap: 9px;
  margin-left: auto;
  padding-right: 23px;
  > svg {
    fill: none;
    stroke: #fff;
  }
`;

const Clock = styled.div`
  display: flex;
  flex-direction: column;
  gap: 4px;
  width: 60px;
  margin-right: 4px;
  font-size: 11px;
  line-height: 14px;
  text-align: center;
`;
